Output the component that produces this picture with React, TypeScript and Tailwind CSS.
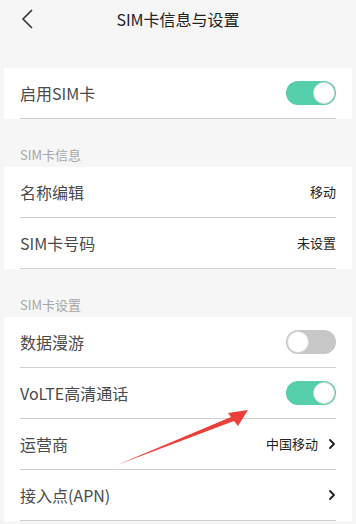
import { ChevronRight } from "lucide-react";

const FONT = "font-['Noto_Sans_CJK_SC','Noto_Sans',sans-serif]";

function Toggle({ on }: { on: boolean }) {
  return (
    <span
      className={`relative inline-block h-[24px] w-[50px] rounded-full ${
        on ? "bg-[#55cfa9]" : "bg-[#c7c7c7]"
      }`}
    >
      <span
        className={`absolute top-[1px] h-[22px] w-[22px] rounded-full border border-[#d9d9d9] bg-white ${
          on ? "right-[1px]" : "left-[1px]"
        }`}
      />
    </span>
  );
}

function Row({ label, right }: { label: string; right?: React.ReactNode }) {
  return (
    <div className="mx-[16px] flex h-[51px] items-center justify-between border-b border-[#cfcfcf]">
      <span className="text-[16px] text-[#4a4a4a]">{label}</span>
      {right}
    </div>
  );
}

function SectionLabel({ text, h }: { text: string; h: string }) {
  return (
    <div className={`flex items-end pb-[3px] pl-[20px] text-[13px] text-[#a6a6a6] ${h}`}>
      {text}
    </div>
  );
}

export default function App() {
  return (
    <div className={`relative h-[524px] w-[356px] overflow-hidden bg-[#f6f6f6] ${FONT}`}>
      <div className="relative flex h-[38px] items-center justify-center">
        <svg className="absolute left-[20px] top-[9px]" width="16" height="20" viewBox="0 0 16 20">
          <path d="M12 1 L3 10 L12 19" fill="none" stroke="#333" strokeWidth="1.6" />
        </svg>
        <span className="text-[16px] text-[#222]">SIM卡信息与设置</span>
      </div>
      <div className="h-[30px]" />

      <div className="mx-[4px] bg-white">
        <div className="mx-[16px] flex h-[51px] items-center justify-between border-b border-[#cfcfcf]">
          <span className="text-[16px] text-[#4a4a4a]">启用SIM卡</span>
          <Toggle on />
        </div>
      </div>

      <SectionLabel text="SIM卡信息" h="h-[48px]" />

      <div className="mx-[4px] bg-white">
        <Row label="名称编辑" right={<span className="text-[13px] text-[#222]">移动</span>} />
        <Row label="SIM卡号码" right={<span className="text-[13px] text-[#222]">未设置</span>} />
      </div>

      <SectionLabel text="SIM卡设置" h="h-[48px]" />

      <div className="mx-[4px] bg-white">
        <Row label="数据漫游" right={<Toggle on={false} />} />
        <Row label="VoLTE高清通话" right={<Toggle on />} />
        <Row
          label="运营商"
          right={
            <span className="flex items-center gap-[6px] text-[13px] text-[#222]">
              中国移动
              <ChevronRight className="mr-[-4px] h-[16px] w-[16px] text-[#222]" strokeWidth={2.8} />
            </span>
          }
        />
        <Row
          label="接入点(APN)"
          right={<ChevronRight className="mr-[-4px] h-[16px] w-[16px] text-[#222]" strokeWidth={2.8} />}
        />
      </div>

      <svg className="absolute left-0 top-0" width="356" height="524" viewBox="0 0 356 524">
        <polygon
          points="117,465 231,417 228,413 248,410 238,426 234,421"
          fill="#ea3f3a"
        />
      </svg>
    </div>
  );
}
